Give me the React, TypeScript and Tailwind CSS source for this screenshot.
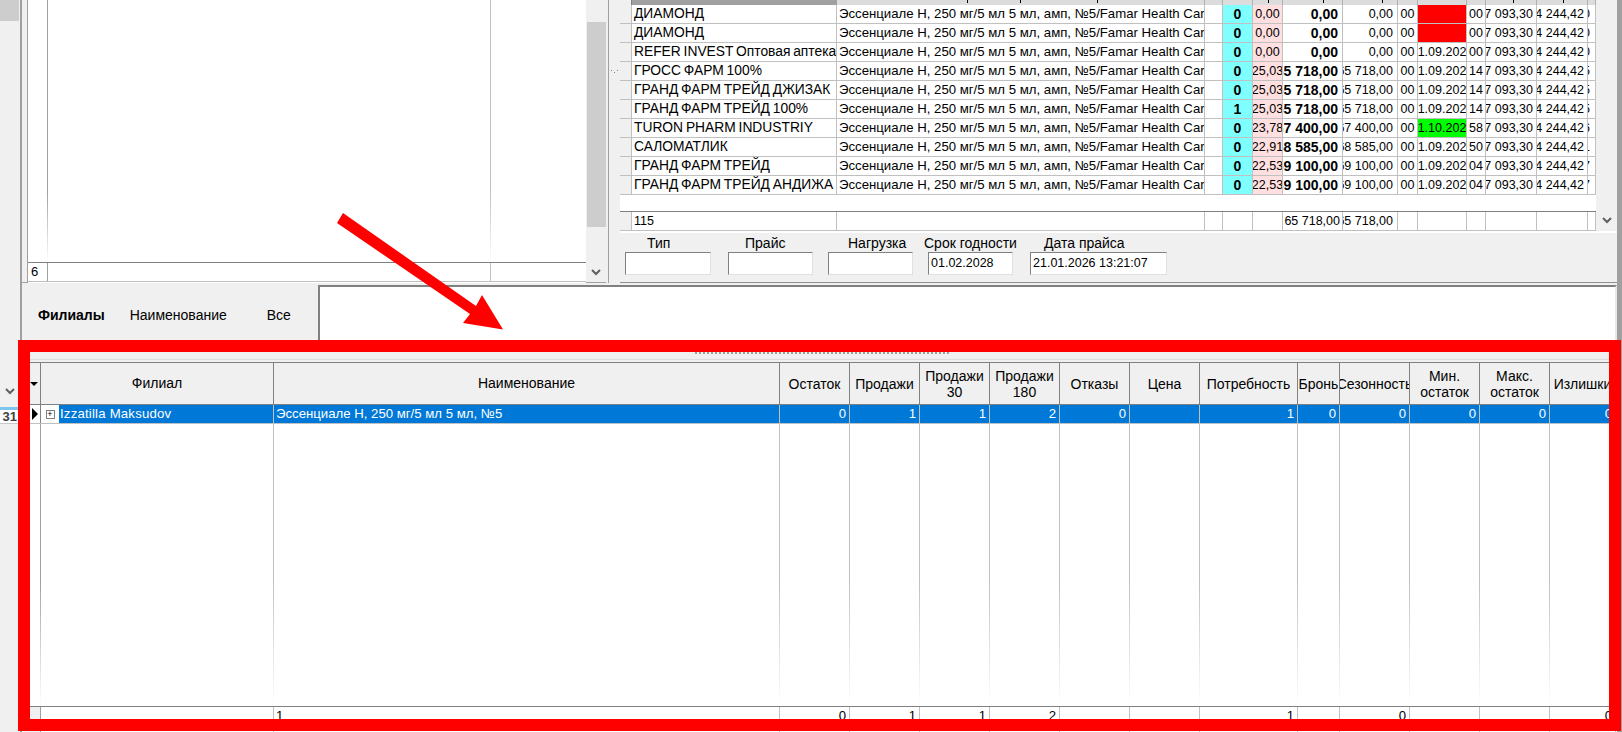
import React from "react"

const Chevron = () => (
  <svg width="10" height="7" viewBox="0 0 10 7" fill="none">
    <path d="M1 1l4 4 4-4" stroke="#606060" strokeWidth="2" />
  </svg>
)

type TopRow = {
  name: string
  qty: string
  pct: string
  price: string
  base: string
  date: string
  dateBg?: string
  days: string
  tail: string
}

const topRows: TopRow[] = [
  { name: "ДИАМОНД", qty: "0", pct: "0,00", price: "0,00", base: "0,00", date: "", dateBg: "bg-[#ff0000]", days: "00", tail: "0" },
  { name: "ДИАМОНД", qty: "0", pct: "0,00", price: "0,00", base: "0,00", date: "", dateBg: "bg-[#ff0000]", days: "00", tail: "0" },
  { name: "REFER INVEST Оптовая аптека", qty: "0", pct: "0,00", price: "0,00", base: "0,00", date: "01.09.2027", days: "00", tail: "0" },
  { name: "ГРОСС ФАРМ 100%", qty: "0", pct: "25,03", price: "65 718,00", base: "65 718,00", date: "01.09.2027", days: "14", tail: "5" },
  { name: "ГРАНД ФАРМ ТРЕЙД ДЖИЗАК", qty: "0", pct: "25,03", price: "65 718,00", base: "65 718,00", date: "01.09.2027", days: "14", tail: "5" },
  { name: "ГРАНД ФАРМ ТРЕЙД 100%", qty: "1", pct: "25,03", price: "65 718,00", base: "65 718,00", date: "01.09.2027", days: "14", tail: "5" },
  { name: "TURON PHARM INDUSTRIY", qty: "0", pct: "23,78", price: "67 400,00", base: "67 400,00", date: "01.10.2027", dateBg: "bg-[#00ff00]", days: "58", tail: "6" },
  { name: "САЛОМАТЛИК", qty: "0", pct: "22,91", price: "68 585,00", base: "68 585,00", date: "01.09.2027", days: "50", tail: "1" },
  { name: "ГРАНД ФАРМ ТРЕЙД", qty: "0", pct: "22,53", price: "69 100,00", base: "69 100,00", date: "01.09.2027", days: "04", tail: "7" },
  { name: "ГРАНД ФАРМ ТРЕЙД АНДИЖА", qty: "0", pct: "22,53", price: "69 100,00", base: "69 100,00", date: "01.09.2027", days: "04", tail: "7" },
]

const cell = "flex items-center overflow-hidden whitespace-nowrap border-r border-[#c0c0c0] h-full shrink-0"

// bits of the header's descenders that stick out above the first visible row
const headerTicks = [347, 400, 477, 648, 703, 762, 893, 943]
const headerCols = ["w-[12px]", "w-[205px]", "w-[368px]", "w-[18px]", "w-[30px]", "w-[30px]", "w-[60px]", "w-[55px]", "w-[20px]", "w-[49px]", "w-[19px]", "w-[51px]", "w-[51px]", "w-[8px]"]

const TopGrid = () => (
  <div className="w-[976px] h-[231px] bg-white flex flex-col">
    <div className="relative flex h-[5px] shrink-0 bg-[#dcdcdc]">
      {headerCols.map((w, i) => (
        <div
          key={i}
          className={`${w} shrink-0 border-r ${i === 0 ? "bg-[#f0f0f0] border-[#808080]" : i === 1 ? "bg-[#a0a0a0] border-[#a0a0a0]" : "border-[#b0b0b0]"}`}
        />
      ))}
      {headerTicks.map((x) => (
        <span key={x} className="absolute top-0 h-[3px] w-[1px] bg-black" style={{ left: x }} />
      ))}
    </div>
    {topRows.map((r, i) => (
      <div key={i} className="flex h-[19px] shrink-0 border-b border-[#c0c0c0]">
        <div className={`${cell} w-[12px] bg-[#f0f0f0] border-[#808080]`} />
        <div className={`${cell} w-[205px] pl-[2px] text-[13.8px] [word-spacing:-1px]`}>{r.name}</div>
        <div className={`${cell} w-[368px] pl-[2px] text-[13.2px]`}>Эссенциале Н, 250 мг/5 мл 5 мл, амп, №5/Famar Health Care</div>
        <div className={`${cell} w-[18px]`} />
        <div className={`${cell} w-[30px] justify-center bg-[#80ffff] font-bold text-[14px]`}>{r.qty}</div>
        <div className={`${cell} w-[30px] justify-center bg-[#ffdfdf] text-[12.5px]`}>{r.pct}</div>
        <div className={`${cell} w-[60px] justify-end pr-[4px] font-bold text-[14px]`}>{r.price}</div>
        <div className={`${cell} w-[55px] justify-end pr-[4px] text-[12.5px]`}>{r.base}</div>
        <div className={`${cell} w-[20px] justify-center text-[12.5px]`}>00</div>
        <div className={`${cell} w-[49px] justify-center text-[12.5px] ${r.dateBg ?? ""}`}>{r.date}</div>
        <div className={`${cell} w-[19px] justify-center text-[12.5px]`}>{r.days}</div>
        <div className={`${cell} w-[51px] justify-end pr-[3px] text-[12.5px]`}>37 093,30</div>
        <div className={`${cell} w-[51px] justify-end pr-[3px] text-[12.5px]`}>34 244,42</div>
        <div className={`${cell} w-[8px] text-[12.5px]`}>
          <span className="-ml-[5px]">{r.tail}</span>
        </div>
      </div>
    ))}
    <div className="h-[16px] shrink-0" />
    <div className="flex h-[20px] shrink-0 border-y border-t-[#808080] border-b-[#c0c0c0] text-[12.5px]">
      <div className={`${cell} w-[12px] bg-[#f0f0f0] border-[#808080]`} />
      <div className={`${cell} w-[205px] pl-[2px]`}>115</div>
      <div className={`${cell} w-[368px]`} />
      <div className={`${cell} w-[18px]`} />
      <div className={`${cell} w-[30px]`} />
      <div className={`${cell} w-[30px]`} />
      <div className={`${cell} w-[60px] justify-end pr-[2px]`}>65 718,00</div>
      <div className={`${cell} w-[55px] justify-end pr-[4px]`}>65 718,00</div>
      <div className={`${cell} w-[20px]`} />
      <div className={`${cell} w-[49px]`} />
      <div className={`${cell} w-[19px]`} />
      <div className={`${cell} w-[51px]`} />
      <div className={`${cell} w-[51px]`} />
      <div className={`${cell} w-[8px]`} />
    </div>
  </div>
)

const FormField = ({
  label,
  value,
  width,
  labelPad,
  gap,
}: {
  label: string
  value?: string
  width: string
  labelPad: string
  gap: string
}) => (
  <div className={`flex flex-col ${width} ${gap}`}>
    <div className={`h-[19px] pt-[1px] leading-[19px] whitespace-nowrap text-[14px] ${labelPad}`}>{label}</div>
    <div className="h-[23px] bg-white border border-t-[#808080] border-l-[#808080] border-r-[#e0e0e0] border-b-[#e0e0e0] pl-[2px] leading-[21px] text-[12.5px]">
      {value}
    </div>
  </div>
)

const leftLines = [
  { w: "w-[20px]", line: "border-[#a0a0a0]" },
  { w: "w-[443px]", line: "border-[#c0c0c0]" },
  { w: "flex-1", line: "border-transparent" },
]

const LeftGrid = () => (
  <div className="flex w-[559px] h-[283px] flex-col bg-white border-l border-[#a0a0a0]">
    <div className="relative flex h-[262px] shrink-0">
      {leftLines.map((c, i) => (
        <div key={i} className={`${c.w} h-full border-r ${c.line}`} />
      ))}
      <div className="absolute inset-x-0 bottom-0 h-[70px] bg-gradient-to-b from-transparent to-white" />
    </div>
    <div className="flex h-[20px] shrink-0 border-y border-t-[#808080] border-b-[#c0c0c0]">
      <div className="w-[20px] pl-[3px] border-r border-[#a0a0a0] leading-[18px]">6</div>
      <div className="w-[443px] border-r border-[#c0c0c0]" />
    </div>
  </div>
)

const lowerCols = [
  { title: "Остаток", w: "w-[70px]", value: "0", total: "0" },
  { title: "Продажи", w: "w-[70px]", value: "1", total: "1" },
  { title: "Продажи\n30", w: "w-[70px]", value: "1", total: "1" },
  { title: "Продажи\n180", w: "w-[70px]", value: "2", total: "2" },
  { title: "Отказы", w: "w-[70px]", value: "0", total: "" },
  { title: "Цена", w: "w-[70px]", value: "", total: "" },
  { title: "Потребность", w: "w-[98px]", value: "1", total: "1" },
  { title: "Бронь", w: "w-[42px]", value: "0", total: "" },
  { title: "Сезонность", w: "w-[70px]", value: "0", total: "0" },
  { title: "Мин.\nостаток", w: "w-[70px]", value: "0", total: "" },
  { title: "Макс.\nостаток", w: "w-[70px]", value: "0", total: "" },
  { title: "Излишки", w: "w-[66px]", value: "0", total: "0" },
]

const LowerGrid = () => (
  <div className="flex flex-1 flex-col bg-white border-t border-[#808080] text-[13.2px] overflow-hidden">
    <div className="flex h-[42px] shrink-0 bg-[#f0f0f0] border-b border-[#808080] text-[14px]">
      <div className="flex w-[19px] h-full shrink-0 items-center justify-end pr-[2px] border-r border-[#808080]">
        <span className="w-0 h-0 border-x-[4px] border-x-transparent border-t-[4px] border-t-black" />
      </div>
      <div className="flex w-[233px] h-full shrink-0 items-center justify-center border-r border-[#808080]">Филиал</div>
      <div className="flex w-[506px] h-full shrink-0 items-center justify-center border-r border-[#808080]">Наименование</div>
      {lowerCols.map((c) => (
        <div
          key={c.title}
          className={`flex ${c.w} h-full shrink-0 items-center justify-center overflow-hidden border-r border-[#808080] text-center leading-[16px] whitespace-pre`}
        >
          {c.title}
        </div>
      ))}
    </div>
    <div className="flex h-[19px] shrink-0 bg-[#0078d7] text-white border-b border-[#c0c0c0]">
      <div className="flex w-[19px] h-full shrink-0 items-center justify-end bg-white pr-[2px] border-r border-[#808080]">
        <span className="w-0 h-0 border-y-[6px] border-y-transparent border-l-[6px] border-l-black" />
      </div>
      <div className="flex w-[233px] h-full shrink-0 items-center border-r border-[#c0c0c0]">
        <div className="flex w-[18px] h-full items-center justify-center bg-white">
          <span className="flex w-[9px] h-[9px] items-center justify-center border border-[#808080] text-black text-[9px] leading-none">+</span>
        </div>
        <span className="pl-[1px] tracking-[0.2px]">Izzatilla Maksudov</span>
      </div>
      <div className="flex w-[506px] h-full shrink-0 items-center pl-[2px] border-r border-[#c0c0c0]">Эссенциале Н, 250 мг/5 мл 5 мл, №5</div>
      {lowerCols.map((c) => (
        <div key={c.title} className={`flex ${c.w} h-full shrink-0 items-center justify-end pr-[3px] border-r border-[#c0c0c0]`}>
          {c.value}
        </div>
      ))}
    </div>
    <div className="relative flex h-[282px] shrink-0">
      <div className="w-[19px] h-full shrink-0 border-r border-[#a0a0a0]" />
      <div className="w-[233px] h-full shrink-0 border-r border-[#c0c0c0]" />
      <div className="w-[506px] h-full shrink-0 border-r border-[#c0c0c0]" />
      {lowerCols.map((c) => (
        <div key={c.title} className={`${c.w} h-full shrink-0 border-r border-[#c0c0c0]`} />
      ))}
      <div className="absolute inset-x-0 bottom-0 h-[125px] bg-gradient-to-b from-transparent to-white" />
    </div>
    <div className="flex h-[26px] shrink-0 border-t border-[#808080]">
      <div className="w-[19px] h-full shrink-0 bg-[#f0f0f0] border-r border-[#a0a0a0]" />
      <div className="w-[233px] h-full shrink-0 border-r border-[#c0c0c0]" />
      <div className="w-[506px] h-full shrink-0 pl-[2px] border-r border-[#c0c0c0] leading-[18px]">1</div>
      {lowerCols.map((c) => (
        <div key={c.title} className={`flex ${c.w} h-full shrink-0 justify-end pr-[3px] border-r border-[#c0c0c0] leading-[18px]`}>
          {c.total}
        </div>
      ))}
    </div>
  </div>
)

export default function App() {
  return (
    <div className="relative flex h-[732px] w-[1622px] overflow-hidden bg-[#f0f0f0] text-[13px] text-black font-['Liberation_Sans',sans-serif]">
      {/* left edge strip */}
      <div className="flex w-[22px] shrink-0 flex-col border-r-2 border-[#a0a0a0]">
        <div className="h-[21px] w-[19px] bg-[#cdcdcd]" />
        <div className="mt-[367px] flex w-[19px] justify-center">
          <Chevron />
        </div>
        <div className="mt-[12px] h-[17px] w-[18px] bg-white border-t-[3px] border-b border-t-[#7fc4ee] border-b-[#c8c8c8] text-[13px] font-bold leading-[14px] text-[#404040] text-right pr-[1px]">
          31
        </div>
      </div>

      <div className="flex w-[1595px] shrink-0 flex-col">
        {/* top panes */}
        <div className="flex h-[285px] shrink-0">
          <div className="flex h-[283px] w-[584px] shrink-0 pl-[5px] border-b border-[#a0a0a0]">
            <LeftGrid />
            <div className="flex h-[283px] w-[20px] flex-col items-center">
              <div className="mt-[22px] h-[205px] w-[19px] bg-[#cdcdcd]" />
              <div className="mt-[42px]">
                <Chevron />
              </div>
            </div>
          </div>
          <div className="relative w-[14px] shrink-0">
            <div className="ml-[2px] h-[283px] w-[1px] bg-[#a0a0a0]" />
            <div className="absolute left-[5px] top-[70px] flex gap-[2px]">
              <span className="h-[1px] w-[1px] bg-[#808080]" />
              <span className="mt-[2px] h-[1px] w-[1px] bg-[#808080]" />
              <span className="h-[1px] w-[1px] bg-[#808080]" />
            </div>
          </div>
          <div className="flex h-[283px] w-[997px] shrink-0 flex-col border-b border-[#909090]">
            <div className="flex h-[231px] shrink-0">
              <TopGrid />
              <div className="flex w-[21px] flex-col items-center justify-end pb-[7px]">
                <Chevron />
              </div>
            </div>
            <div className="h-[2px] shrink-0 bg-white" />
            <div className="flex pl-[5px]">
              <FormField label="Тип" width="w-[86px]" labelPad="pl-[22px]" gap="mr-[17px]" />
              <FormField label="Прайс" width="w-[85px]" labelPad="pl-[17px]" gap="mr-[15px]" />
              <FormField label="Нагрузка" width="w-[85px]" labelPad="pl-[20px]" gap="mr-[15px]" />
              <FormField label="Срок годности" value="01.02.2028" width="w-[85px]" labelPad="-ml-[4px]" gap="mr-[17px]" />
              <FormField label="Дата прайса" value="21.01.2026 13:21:07" width="w-[137px]" labelPad="pl-[14px]" gap="" />
            </div>
          </div>
        </div>

        {/* filter row */}
        <div className="flex h-[55px] shrink-0 pl-[4px]">
          <div className="flex w-[292px] shrink-0 items-center gap-[25px] pl-[12px] pt-[6px] text-[14px]">
            <span className="font-bold">Филиалы</span>
            <span>Наименование</span>
            <span className="ml-[15px]">Все</span>
          </div>
          <div className="flex-1 bg-white border-2 border-t-[#808080] border-l-[#808080] border-r-[#e8e8e8] border-b-0" />
        </div>

        {/* splitter */}
        <div className="flex h-[22px] shrink-0 flex-col">
          <div className="ml-[673px] mt-[12px] h-[2px] w-[254px] bg-[repeating-linear-gradient(90deg,#a0a090_0,#a0a090_2px,transparent_2px,transparent_4px)]" />
          <div className="mt-[5px] h-[1px] bg-[#dcdcdc]" />
        </div>

        <LowerGrid />
      </div>

      <div className="flex-1 bg-[#a0a0a0]" />

      {/* annotation */}
      <div className="pointer-events-none absolute left-[18px] top-[340px] h-[391px] w-[1603px] border-[12px] border-[#ff0000]" />
      <svg className="pointer-events-none absolute left-0 top-0" width="1622" height="732">
        <polygon points="343,213 476,306 482,295 503,329.5 463,323 470,314 337,223" fill="#ff0000" />
      </svg>
    </div>
  )
}
